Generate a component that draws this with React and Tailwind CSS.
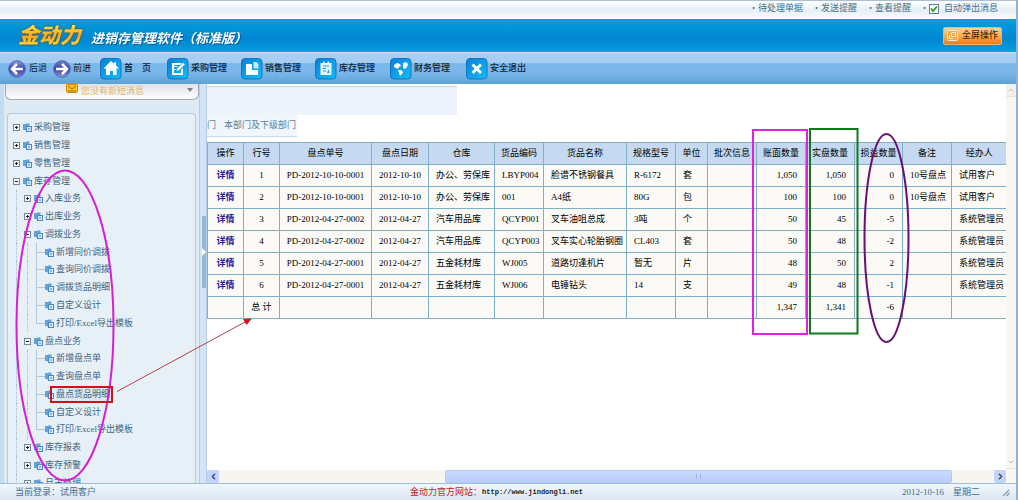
import { ChevronDown, ChevronLeft, ChevronRight, ChevronUp } from 'lucide-react';

const tree = [
  { level: 0, label: '采购管理', state: 'closed' },
  { level: 0, label: '销售管理', state: 'closed' },
  { level: 0, label: '零售管理', state: 'closed' },
  { level: 0, label: '库存管理', state: 'open' },
  { level: 1, label: '入库业务', state: 'closed' },
  { level: 1, label: '出库业务', state: 'closed' },
  { level: 1, label: '调拨业务', state: 'open' },
  { level: 2, label: '新增同价调拨' },
  { level: 2, label: '查询同价调拨' },
  { level: 2, label: '调拨货品明细' },
  { level: 2, label: '自定义设计' },
  { level: 2, label: '打印/Excel导出模板', last: true },
  { level: 1, label: '盘点业务', state: 'open' },
  { level: 2, label: '新增盘点单' },
  { level: 2, label: '查询盘点单' },
  { level: 2, label: '盘点货品明细', active: true },
  { level: 2, label: '自定义设计' },
  { level: 2, label: '打印/Excel导出模板', last: true },
  { level: 1, label: '库存报表', state: 'closed' },
  { level: 1, label: '库存预警', state: 'closed' },
  { level: 1, label: '月末处理', state: 'closed' },
];

const columns = [
  { title: '操作', width: 36, align: 'text-center' },
  { title: '行号', width: 36, align: 'text-center' },
  { title: '盘点单号', width: 92, align: 'text-center' },
  { title: '盘点日期', width: 57, align: 'text-center' },
  { title: '仓库', width: 66, align: 'text-left' },
  { title: '货品编码', width: 49, align: 'text-left' },
  { title: '货品名称', width: 83, align: 'text-left' },
  { title: '规格型号', width: 49, align: 'text-left' },
  { title: '单位', width: 32, align: 'text-left' },
  { title: '批次信息', width: 49, align: 'text-left' },
  { title: '账面数量', width: 49, align: 'text-right' },
  { title: '实盘数量', width: 49, align: 'text-right' },
  { title: '损益数量', width: 48, align: 'text-right' },
  { title: '备注', width: 49, align: 'text-left' },
  { title: '经办人', width: 55, align: 'text-left' },
];

const rows = [
  ['详情', '1', 'PD-2012-10-10-0001', '2012-10-10', '办公、劳保库', 'LBYP004', '脸谱不锈钢餐具', 'R-6172', '套', '', '1,050', '1,050', '0', '10号盘点', '试用客户'],
  ['详情', '2', 'PD-2012-10-10-0001', '2012-10-10', '办公、劳保库', '001', 'A4纸', '80G', '包', '', '100', '100', '0', '10号盘点', '试用客户'],
  ['详情', '3', 'PD-2012-04-27-0002', '2012-04-27', '汽车用品库', 'QCYP001', '叉车油咀总成', '3吨', '个', '', '50', '45', '-5', '', '系统管理员'],
  ['详情', '4', 'PD-2012-04-27-0002', '2012-04-27', '汽车用品库', 'QCYP003', '叉车实心轮胎钢圈', 'CL403', '套', '', '50', '48', '-2', '', '系统管理员'],
  ['详情', '5', 'PD-2012-04-27-0001', '2012-04-27', '五金耗材库', 'WJ005', '道路切逢机片', '暂无', '片', '', '48', '50', '2', '', '系统管理员'],
  ['详情', '6', 'PD-2012-04-27-0001', '2012-04-27', '五金耗材库', 'WJ006', '电锤钻头', '14', '支', '', '49', '48', '-1', '', '系统管理员'],
  ['', '总 计', '', '', '', '', '', '', '', '', '1,347', '1,341', '-6', '', ''],
];

const navIcons = {
  home: (
    <>
      <path d="M11 3 3.500 10.500H6V17h4v-4h3v4h3.500v-6.500H19L16 7.500V4.500h-2v1.200z" fill="#fff" />
    </>
  ),
  purchase: (
    <>
      <path d="M5 5h10l-2 2H7v1h4l-1 1H7v2h2v1H7v3h7v-3l2-2v7H5z" fill="#fff" />
      <path d="m9 13.500 1-3 6-6 2 2-6 6z" fill="#fff" stroke="#1a9be4" strokeWidth=".6" />
    </>
  ),
  sale: (
    <>
      <path d="M5 6h6v6h6v5H5z" fill="#fff" />
      <path d="M12.500 4h3l2 2v4.500h-5z" fill="#c3ecff" />
    </>
  ),
  stock: (
    <>
      <path d="M5.500 5H8V3.500h1.500V5h3V3.500H14V5h2.500v12h-11z" fill="#e6f7ff" />
      <path d="M8 8h6M8 10.500h3M8 13h3" stroke="#1a9be4" />
      <path d="m12 15 1.500-4 1 4z" fill="#1a9be4" />
    </>
  ),
  finance: (
    <>
      <path d="m4 7 3-2 3 1 1 2-2 1-1 2-2-1-2-1z" fill="#fff" />
      <path d="m13 5 3-1 2 2-1 3-2 2-2-1v-2z" fill="#fff" />
      <path d="m8 12 3 0 2 2-1 2-2 2-1-3z" fill="#fff" />
    </>
  ),
  exit: <path d="m6.500 6.500 8.500 8.500M15 6.500 6.500 15" stroke="#fff" strokeWidth="3" />,
};

const navItems = [
  { icon: 'home', label: '首　页', width: 'w-[67px]' },
  { icon: 'purchase', label: '采购管理', width: 'w-[74px]' },
  { icon: 'sale', label: '销售管理', width: 'w-[74px]' },
  { icon: 'stock', label: '库存管理', width: 'w-[75px]' },
  { icon: 'finance', label: '财务管理', width: 'w-[76px]' },
  { icon: 'exit', label: '安全退出', width: 'w-[76px]' },
];

function RoundArrow({ flip }) {
  return (
    <svg viewBox="0 0 18 18" className={`h-[18px] w-[18px] ${flip ? 'rotate-180' : ''}`}>
      <defs>
        <linearGradient id="orb" x1="0" y1="0" x2="0" y2="1">
          <stop offset="0" stopColor="#8f9ce6" />
          <stop offset=".5" stopColor="#3840ae" />
          <stop offset="1" stopColor="#7482da" />
        </linearGradient>
      </defs>
      <circle cx="9" cy="9" r="8.300" fill="url(#orb)" stroke="#5664a8" />
      <path d="M15 9H4.500M9 4 4 9l5 5" fill="none" stroke="#fff" strokeWidth="2.600" />
    </svg>
  );
}

function NavIcon({ name }) {
  return (
    <svg viewBox="0 0 22 22" className="h-[22px] w-[22px] shrink-0">
      <defs>
        <linearGradient id="tile" x1="0" y1="0" x2="1" y2="1">
          <stop offset="0" stopColor="#0a7fd6" />
          <stop offset="1" stopColor="#14bdf8" />
        </linearGradient>
      </defs>
      <rect x=".5" y=".5" width="20.500" height="20.500" rx="3.500" fill="url(#tile)" stroke="#1573bf" />
      {navIcons[name]}
    </svg>
  );
}

function FolderIcon() {
  return (
    <svg viewBox="0 0 9 9" className="h-[9px] w-[9px] shrink-0">
      <path d="M0 1h3v-.500h3.500V4H4v4H2.500V7H0z" fill="#62a3d8" />
      <rect x="3.500" y="3.500" width="5" height="5" fill="#d6e8f7" stroke="#4a8ac6" />
      <path d="M5 6h2" stroke="#4a8ac6" />
    </svg>
  );
}

function ExpandBox({ state }) {
  return (
    <svg viewBox="0 0 7 7" className="h-[7px] w-[7px] shrink-0">
      <rect x=".5" y=".5" width="6" height="6" fill="#f4f8fb" stroke="#75879a" />
      <path d={state === 'closed' ? 'M2 3.500h3M3.500 2v3' : 'M2 3.500h3'} stroke="#222" />
    </svg>
  );
}

function TreeRow({ item }) {
  return (
    <li className="flex items-stretch">
      {item.level > 0 && <span className="ml-[3px] w-[8px] border-l border-dotted border-[#a9b9c6]" />}
      {item.level > 1 && <span className="ml-[3px] w-[9px] border-l border-dotted border-[#a9b9c6]" />}
      {item.level > 1 && (
        <span className="flex w-[9px] flex-col">
          <span className="flex-1 border-b border-l border-[#b4c6d4]" />
          <span className={`flex-1 ${item.last ? '' : 'border-l border-[#b4c6d4]'}`} />
        </span>
      )}
      <button type="button" className="flex items-center whitespace-nowrap text-[#3a6685]">
        {item.state && <ExpandBox state={item.state} />}
        <span className={item.state ? 'ml-[3px]' : ''}><FolderIcon /></span>
        <span className={`ml-[2px] leading-[13px] ${item.active ? 'bg-[#dbe7f1]' : ''}`}>{item.label}</span>
      </button>
    </li>
  );
}

function TopBar() {
  return (
    <div className="flex h-[19px] shrink-0 items-start justify-end border-t border-[#a9bfd4] bg-linear-to-b from-white via-[#e6eff7] to-[#fbfbf8] pr-[18px] text-[#44708a]">
      <nav className="flex h-[15px] items-center gap-[9px]">
        <a href="#pending">・待处理单据</a>
        <a href="#send">・发送提醒</a>
        <a href="#view">・查看提醒</a>
      </nav>
      <label className="ml-[9px] flex h-[15px] items-center">
        ・
        <input
          type="checkbox"
          defaultChecked
          className="h-[10px] w-[10px] appearance-none border border-[#5b7f9c] bg-white"
        />
        <svg viewBox="0 0 10 10" className="-ml-[10px] h-[10px] w-[10px]">
          <path d="m2 4.500 2 2.500 4-4.500" fill="none" stroke="#21a121" strokeWidth="1.800" />
        </svg>
        <span className="ml-[5px]">自动弹出消息</span>
      </label>
    </div>
  );
}

function Header() {
  return (
    <header className="flex h-[33px] shrink-0 items-center bg-linear-to-b from-[#069fda] via-[#0286d3] via-60% to-[#079edb] pr-[14px] pl-[18px]">
      <span className="drop-shadow-[0_0_1px_#6b3f00]">
        <span className="bg-linear-to-b from-[#ffe94a] via-[#f7a51f] to-[#ffe63c] bg-clip-text pr-1 text-[21px] leading-[26px] font-black text-transparent italic">
          金动力
        </span>
      </span>
      <h1 className="ml-[6px] pt-[6px] text-[13px] font-bold whitespace-nowrap text-white italic drop-shadow-[1px_1px_0_#0a5c99]">
        进销存管理软件（标准版）
      </h1>
      <button
        type="button"
        className="ml-auto flex h-[18px] w-[59px] items-center justify-center gap-1 rounded-xs border border-[#f2b06a] bg-linear-to-b from-[#fed391] via-[#fbac4d] to-[#f47a0c] font-medium whitespace-nowrap text-[#4e2604]"
      >
        <svg viewBox="0 0 11 11" className="h-[11px] w-[11px]">
          <rect x=".5" y=".5" width="10" height="10" rx="1" fill="#f9a54a" stroke="#ffe9c9" />
          <path d="M4.500 2.500h4v4h-4zM2.500 5v3.500H6" fill="none" stroke="#ffeed8" />
        </svg>
        全屏操作
      </button>
    </header>
  );
}

function Toolbar() {
  return (
    <nav className="flex h-[32px] shrink-0 items-center border-t border-[#cfe4f6] bg-[linear-gradient(#a9d0f3_0,#a5cdf2_32%,#7ab8ec_34%,#7ab6ea_65%,#5ba3d6_100%)] pl-2 text-[#0d1c33]">
      <button type="button" className="flex w-[45px] items-center gap-[3px] whitespace-nowrap">
        <RoundArrow />
        后退
      </button>
      <button type="button" className="flex w-[47px] items-center gap-[2px] whitespace-nowrap">
        <RoundArrow flip />
        前进
      </button>
      {navItems.map((item) => (
        <button key={item.icon} type="button" className={`flex shrink-0 items-center gap-[2px] font-medium whitespace-nowrap ${item.width}`}>
          <NavIcon name={item.icon} />
          {item.label}
        </button>
      ))}
    </nav>
  );
}

function Sidebar() {
  return (
    <aside className="flex w-[199px] shrink-0 flex-col overflow-hidden border-l-4 border-[#c3dcf0] bg-[#dfebf4]">
      <button
        type="button"
        className="ml-[1px] flex h-[16px] shrink-0 items-center rounded-b-md border border-t-0 border-[#a2a9b3] bg-linear-to-b from-[#dfe2e7] to-white pr-[5px] pl-[60px] text-[#e5b45a]"
      >
        <svg viewBox="0 0 12 9" className="mb-[6px] h-[9px] w-[12px]">
          <rect x=".5" y=".5" width="11" height="8" rx="1" fill="#fbc21c" stroke="#c98a0c" />
          <path d="m2 2 4 3 4-3M2 7h8" fill="none" stroke="#a86b06" />
        </svg>
        <span className="ml-[3px]">您没有新短消息</span>
        <svg viewBox="0 0 6 4" className="mb-[3px] ml-auto h-[4px] w-[6px]">
          <path d="M0 0h6L3 4z" fill="#7b8086" />
        </svg>
      </button>
      <div className="mx-[3px] mt-[13px] min-h-0 flex-1 overflow-hidden rounded-t-sm border border-b-0 border-[#b4c9da] bg-[#e8f0f7]">
        <ul className="mt-[5px] ml-[5px] grid h-[373px] auto-rows-fr">
          {tree.map((item, i) => (
            <TreeRow key={i} item={item} />
          ))}
        </ul>
      </div>
    </aside>
  );
}

function StockTable() {
  return (
    <table className="w-full table-fixed border-collapse bg-[#fbfaf7] text-black">
      <colgroup>
        {columns.map((col) => (
          <col key={col.title} style={{ width: col.width }} />
        ))}
      </colgroup>
      <thead>
        <tr className="h-[22px] bg-[#c5daf0]">
          {columns.map((col) => (
            <th key={col.title} className="border border-[#7fb0c8] p-0 text-center font-normal whitespace-nowrap last:border-r-0">
              {col.title}
            </th>
          ))}
        </tr>
      </thead>
      <tbody>
        {rows.map((row, r) => (
          <tr key={r} className="h-[22px]">
            {row.map((cell, c) => (
              <td
                key={c}
                className={`border border-[#7fb0c8] py-0 whitespace-nowrap last:border-r-0 ${c < 4 ? 'px-0' : c > 9 && c < 13 ? 'px-[8px]' : 'px-[7px]'} ${columns[c].align}`}
              >
                {c === 0 && cell ? (
                  <a href="#detail" className="font-bold text-[#2420a0]">{cell}</a>
                ) : (
                  cell
                )}
              </td>
            ))}
          </tr>
        ))}
      </tbody>
    </table>
  );
}

function HorizontalScroll() {
  return (
    <div className="flex h-[13px] shrink-0 items-stretch bg-[#f6f5ef]">
      <button type="button" aria-label="向左" className="flex w-[12px] items-center justify-center rounded-xs bg-[#c3d3fb] text-[#33477c]">
        <ChevronLeft className="h-[9px] w-[9px]" strokeWidth={4} />
      </button>
      <div className="flex flex-1 pr-[42px] pl-[226px]">
        <div className="flex flex-1 items-center justify-center rounded-xs border border-[#b4c8f6] bg-linear-to-b from-[#cbd9fd] to-[#b9cdfb]">
          <span className="h-[5px] w-[5px] border-x border-[#9db5ee]" />
        </div>
      </div>
      <button type="button" aria-label="向右" className="flex w-[12px] items-center justify-center rounded-xs bg-[#c3d3fb] text-[#33477c]">
        <ChevronRight className="h-[9px] w-[9px]" strokeWidth={4} />
      </button>
    </div>
  );
}

function Content() {
  return (
    <main className="flex min-w-0 flex-1">
      <div className="flex min-w-0 flex-1 flex-col bg-white">
        <div className="mt-[2px] h-[29px] w-[250px] border-t border-[#c2d2e6] bg-[#eef4fc]" />
        <div className="flex h-[22px] w-[90px] items-center gap-[8px] border-b border-[#ccd8e4] bg-[#f1f6fc] whitespace-nowrap text-[#55809a]">
          <span>门</span>
          <span>本部门及下级部门</span>
        </div>
        <div className="mt-[5px] flex-1">
          <StockTable />
        </div>
        <HorizontalScroll />
      </div>
      <div className="flex w-[10px] shrink-0 flex-col justify-between bg-[#f8f7f2] pb-[14px] text-[#b9bdb8]">
        <button type="button" aria-label="向上" className="flex h-[13px] items-center justify-center border-b border-[#e6e5dd] bg-[#f1f0ea]">
          <ChevronUp className="h-[8px] w-[8px]" strokeWidth={3} />
        </button>
        <button type="button" aria-label="向下" className="flex h-[13px] items-center justify-center border-b border-[#e6e5dd]">
          <ChevronDown className="h-[8px] w-[8px]" strokeWidth={3} />
        </button>
      </div>
    </main>
  );
}

function Splitter() {
  return (
    <div className="flex w-[8px] shrink-0 flex-col border-x border-[#b4cde4] bg-[#d3e4f5] pt-[132px]">
      <button type="button" aria-label="展开" className="flex h-[72px] items-center justify-center self-end bg-[#94b8dc]">
        <svg viewBox="0 0 4 8" className="h-[8px] w-[4px]">
          <path d="M0 0l4 4-4 4z" fill="#fff" />
        </svg>
      </button>
    </div>
  );
}

function Footer() {
  return (
    <footer className="grid h-[17px] shrink-0 grid-cols-3 items-center border-t border-[#9dbddb] bg-linear-to-b from-[#f0f6fc] to-[#dbe7f2] pr-[6px] pl-[15px] whitespace-nowrap text-[#3f6c8c]">
      <span>当前登录：试用客户</span>
      <span className="flex items-center justify-center pr-8 text-[#c8202a]">
        金动力官方网站：
        <a href="#site" className="font-['Liberation_Mono',monospace] text-[7px] font-bold text-[#222]">http://www.jindongli.net</a>
      </span>
      <span className="flex items-center justify-end gap-[9px]">
        <span>2012-10-16</span>
        <span>星期二</span>
        <svg viewBox="0 0 7 7" className="ml-[14px] h-[7px] w-[7px]">
          <path d="M0 7 6 1M3.500 7 6.500 4" stroke="#7d9ab5" strokeWidth="1.200" />
        </svg>
      </span>
    </footer>
  );
}

// Hand-drawn markers that lie over the window
function Annotations() {
  return (
    <svg viewBox="0 0 1018 500" className="pointer-events-none absolute top-0 left-0 h-[500px] w-[1018px]" fill="none">
      <ellipse cx="65" cy="325.500" rx="48.500" ry="155" stroke="#d41fd6" strokeWidth="2" />
      <rect x="51" y="387" width="61" height="15" stroke="#cf1219" strokeWidth="2" />
      <path d="M117 391.500 245 322" stroke="#b4404a" />
      <path d="m252 318.500-9 .5 3.500 6z" fill="#d0141c" />
      <rect x="753" y="130" width="54" height="204" stroke="#e21fe0" strokeWidth="2" />
      <rect x="810" y="129" width="47.500" height="204.500" stroke="#0f7a1a" strokeWidth="2" />
      <ellipse cx="886.500" cy="238" rx="22" ry="104" stroke="#6a0f72" strokeWidth="2" />
    </svg>
  );
}

export default function App() {
  return (
    <div className="relative flex h-screen flex-col overflow-hidden border-r-2 border-[#8fb4d9] bg-white font-['Liberation_Serif','Noto_Sans_CJK_SC',sans-serif] text-[9px] leading-[13px]">
      <TopBar />
      <Header />
      <Toolbar />
      <div className="flex min-h-0 flex-1">
        <Sidebar />
        <Splitter />
        <Content />
      </div>
      <Footer />
      <Annotations />
    </div>
  );
}
